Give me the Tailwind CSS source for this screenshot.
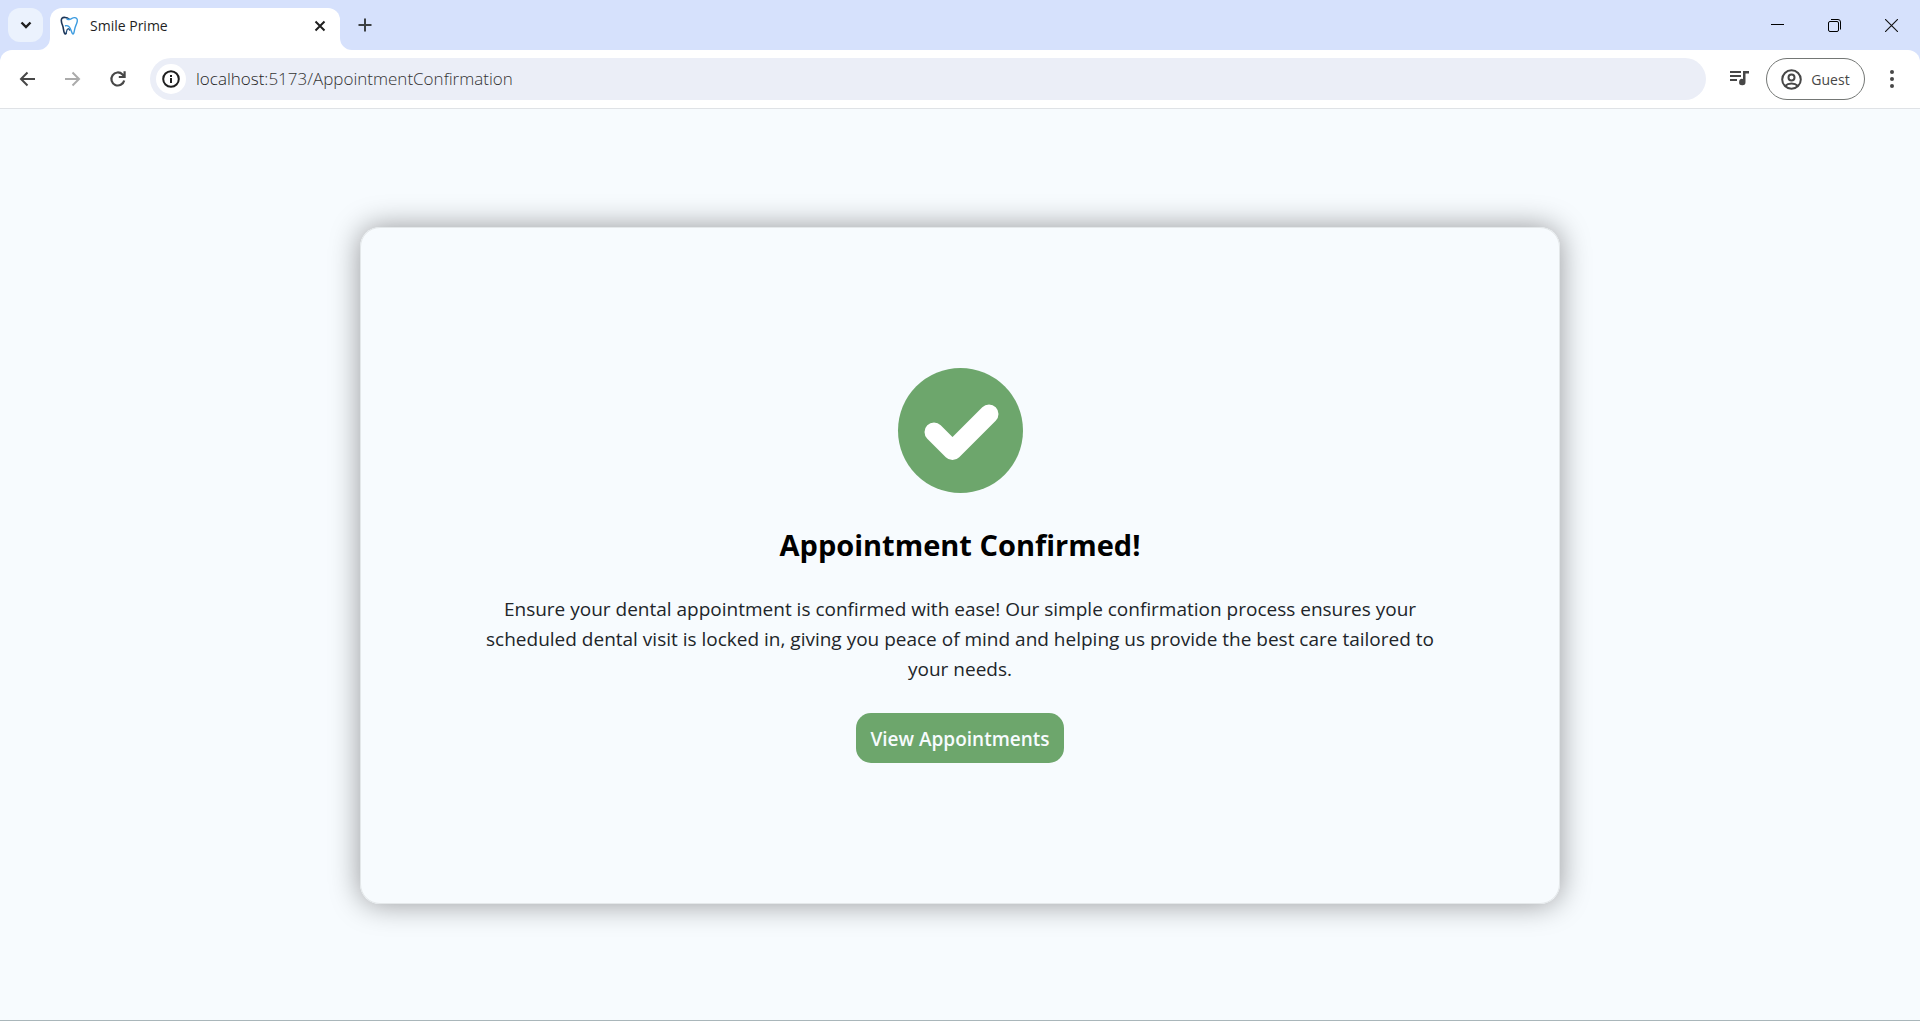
<!DOCTYPE html>
<html lang="en">
<head>
<meta charset="utf-8">
<meta name="viewport" content="width=device-width, initial-scale=1">
<title>Smile Prime</title>
<script src="https://cdn.jsdelivr.net/npm/@tailwindcss/browser@4"></script>
</head>
<body class="flex min-h-screen flex-col bg-[#f7fbfe] font-['Open_Sans','Noto_Sans',sans-serif] text-black">

<header class="bg-[#d6e1fc]">
  <!-- Tab strip -->
  <div class="flex h-[50px] items-end">
    <div class="flex h-[50px] w-[50px] items-center pl-2">
      <button aria-label="Search tabs" class="flex h-[34px] w-[35px] items-center justify-center rounded-xl bg-[#ebf2fd]">
        <svg class="h-3 w-3" viewBox="0 0 12 12" fill="none" stroke="#1f1f1f" stroke-width="2.4"><path d="M1.5 3.5 6 8l4.500-4.500"/></svg>
      </button>
    </div>
    <div class="relative flex h-[42px] w-[290px] items-center rounded-t-xl bg-white pr-[14px] pb-[7px] pl-[10px]">
      <svg class="absolute bottom-0 -left-3 h-3 w-3" viewBox="0 0 12 12"><path d="M12 0v12H0A12 12 0 0 0 12 0z" fill="#fff"/></svg>
      <svg class="absolute -right-3 bottom-0 h-3 w-3" viewBox="0 0 12 12"><path d="M0 0v12h12A12 12 0 0 1 0 0z" fill="#fff"/></svg>
      <svg class="mr-[10px] h-5 w-5" viewBox="0 0 20 20" fill="none" stroke-linecap="round" stroke-linejoin="round">
        <path d="M9 3C7 1.300 3.300.8 2 2.300.9 3.700 1.500 7 2.600 9.500c1 2.300.7 5.300 2 8 .4.800 1.300.5 1.600-.4" stroke="#1d3557" stroke-width="1.600"/>
        <path d="M6.200 17.100c.5-2 .4-4 1.800-4.300 1-.2 1.400.5 1.700 1.400" stroke="#24507f" stroke-width="1.300"/>
        <path d="M5.500 9.800c2.500-.6 4 .7 5 3.200l1.700 4.300c.4 1 1.300.8 1.600-.2.800-2.700.8-5 2-7.500 1.300-2.800 2.200-5.600 1-7-1.300-1.500-4-1-5.800.3-1.500 1-2.700.7-4 .1" stroke="#3b9be0" stroke-width="1.400"/>
      </svg>
      <span class="flex-1 text-[14px] leading-5 text-[#1f1f1f]">Smile Prime</span>
      <button aria-label="Close tab" class="flex h-3 w-3 items-center justify-center">
        <svg class="h-3 w-3" viewBox="0 0 12 12" fill="none" stroke="#1f1f1f" stroke-width="2"><path d="m1.500 1.500 9 9m0-9-9 9"/></svg>
      </button>
    </div>
    <button aria-label="New tab" class="ml-[18px] flex h-[50px] w-[14px] items-center justify-center">
      <svg class="h-[14px] w-[14px]" viewBox="0 0 14 14" fill="none" stroke="#3c4043" stroke-width="2"><path d="M7 .5v13M.5 7h13"/></svg>
    </button>
    <div class="ml-auto flex h-[50px] items-center gap-11 pr-[22px]">
      <button aria-label="Minimize"><svg class="h-[13px] w-[13px]" viewBox="0 0 13 13" stroke="#000"><path d="M0 5.500h13"/></svg></button>
      <button aria-label="Restore"><svg class="h-[13px] w-[13px]" viewBox="0 0 13 13" fill="none" stroke="#000"><rect x=".5" y="2.500" width="10" height="10" rx="1.500"/><path d="M3 .5h7A2.500 2.500 0 0 1 12.500 3v7.500"/></svg></button>
      <button aria-label="Close"><svg class="h-[13px] w-[13px]" viewBox="0 0 13 13" stroke="#111" stroke-width="1.100"><path d="m0 0 13 13M13 0 0 13"/></svg></button>
    </div>
  </div>

  <!-- Toolbar -->
  <div class="flex h-[59px] items-center rounded-t-xl border-b border-[#dfe2e6] bg-white pr-6 pl-[19px]">
    <div class="flex items-center gap-[27px]">
      <button aria-label="Back"><svg class="h-[18px] w-[18px]" viewBox="0 0 18 18" fill="none" stroke="#474747" stroke-width="2"><path d="M16 9H2.500M8.500 2.500 2 9l6.500 6.500"/></svg></button>
      <button aria-label="Forward"><svg class="h-[18px] w-[18px]" viewBox="0 0 18 18" fill="none" stroke="#ababab" stroke-width="2"><path d="M1 9h13.500M8.500 2.500 15 9l-6.500 6.500"/></svg></button>
      <button aria-label="Reload"><svg class="h-[18px] w-[18px]" viewBox="0 0 18 18" fill="none" stroke="#474747" stroke-width="2.200"><path d="M15.200 10.500A6.500 6.500 0 1 1 13.500 4.400l1.500 1.600M15.600 1.200v5.800h-5.800"/></svg></button>
    </div>
    <div class="ml-[23px] flex h-[42px] flex-1 items-center rounded-full bg-[#ebeef7] pl-[6px]">
      <button aria-label="Site information" class="flex h-[30px] w-[30px] items-center justify-center rounded-full bg-white">
        <svg class="h-[18px] w-[18px]" viewBox="0 0 18 18" fill="none" stroke="#1f1f1f" stroke-width="2"><circle cx="9" cy="9" r="7.800"/><path d="M9 8v5M9 5v2"/></svg>
      </button>
      <a href="#" aria-label="Address" class="ml-[10px] text-[17px] leading-6 font-light text-[#333]"><span class="text-[#1f1f1f]">localhost:</span>5173/AppointmentConfirmation</a>
    </div>
    <button aria-label="Media controls" class="ml-6">
      <svg class="h-[18px] w-5" viewBox="0 0 20 18" fill="#474747"><path d="M0 1h11v2H0zM0 5h11v2H0zM0 9h7v2H0zM13 1h6v2.400h-3.500V12a3.200 3.200 0 1 1-2.500-3z"/></svg>
    </button>
    <button class="ml-[16px] flex h-[42px] w-[99px] items-center justify-center gap-[9px] rounded-full border border-[#747775] text-[14px] text-[#474747]">
      <svg class="h-[21px] w-[21px]" viewBox="0 0 21 21" fill="none" stroke="#474747" stroke-width="2"><circle cx="10.500" cy="10.500" r="9.300"/><circle cx="10.500" cy="8.500" r="3"/><path d="M4 17c3.500-3.300 9.500-3.300 13 0"/></svg>
      Guest
    </button>
    <button aria-label="Menu" class="ml-[23px]">
      <svg class="h-5 w-2" viewBox="0 0 8 20" fill="#474747"><circle cx="4" cy="3" r="2"/><circle cx="4" cy="10" r="2"/><circle cx="4" cy="17" r="2"/></svg>
    </button>
  </div>
</header>

<main class="flex flex-1 items-center justify-center border-b border-[#a9b6ba] px-6 pt-[42px] pb-10">
  <section class="flex w-full max-w-[1200px] flex-col items-center rounded-[20px] border border-[#e4e8ea] px-[119px] py-[140px] text-center shadow-[0_0_30px_rgba(0,0,0,0.4)]">
    <svg class="h-[126px] w-[126px]" viewBox="0 0 126 126" fill="none"><circle cx="63.500" cy="62.500" r="62.500" fill="#6da66c"/><path d="M37 64 55.500 82.500 92 46" stroke="#fff" stroke-width="19" stroke-linecap="round" stroke-linejoin="round"/></svg>
    <h1 class="mt-7 text-[29px] leading-[46px] font-bold">Appointment Confirmed!</h1>
    <p class="mt-[26px] text-[19px] leading-[30px] text-[#212529]">Ensure your dental appointment is confirmed with ease! Our simple confirmation process ensures your scheduled dental visit is locked in, giving you peace of mind and helping us provide the best care tailored to your needs.</p>
    <button class="mt-[29px] h-[50px] rounded-[15px] bg-[#6da66c] px-[14px] pt-[2px] text-[19px] font-semibold text-[#f7fbfe]">View Appointments</button>
  </section>
</main>
</body>
</html>
